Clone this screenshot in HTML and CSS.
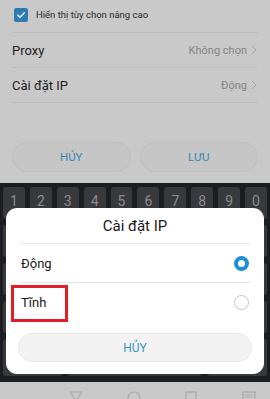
FILE: index.html
```html
<!DOCTYPE html>
<html lang="vi">
<head>
<meta charset="utf-8">
<link rel="stylesheet" href="styles.css">
</head>
<body>
<div class="screen">
  <div class="settings">
    <div class="check-row">
      <span class="checkbox">
        <svg width="10" height="10" viewBox="0 0 10 10"><path d="M1.8 5.2 L4 7.3 L8.3 2.8" fill="none" stroke="#d6e6f0" stroke-width="1.6" stroke-linecap="round" stroke-linejoin="round"/></svg>
      </span>
      <span class="check-label">Hiển thị tùy chọn nâng cao</span>
    </div>
    <div class="row">
      <span class="row-label">Proxy</span>
      <span class="row-value">Không chọn <svg class="chev" width="6" height="10" viewBox="0 0 6 10"><path d="M1 1 L5 5 L1 9" fill="none" stroke="#a4a4a4" stroke-width="1"/></svg></span>
    </div>
    <div class="row">
      <span class="row-label">Cài đặt IP</span>
      <span class="row-value">Động <svg class="chev" width="6" height="10" viewBox="0 0 6 10"><path d="M1 1 L5 5 L1 9" fill="none" stroke="#a4a4a4" stroke-width="1"/></svg></span>
    </div>
    <div class="actions">
      <button class="pill">HỦY</button>
      <button class="pill">LƯU</button>
    </div>
  </div>
  <div class="keyboard">
    <div class="keys">
      <span class="key">1</span><span class="key">2</span><span class="key">3</span><span class="key">4</span><span class="key">5</span><span class="key">6</span><span class="key">7</span><span class="key">8</span><span class="key">9</span><span class="key">0</span>
    </div>
    <div class="keys">
      <span class="key"></span><span class="key"></span><span class="key"></span><span class="key"></span><span class="key"></span><span class="key"></span><span class="key"></span><span class="key"></span><span class="key"></span><span class="key"></span>
    </div>
    <div class="keys">
      <span class="key"></span><span class="key"></span><span class="key"></span><span class="key"></span><span class="key"></span><span class="key"></span><span class="key"></span><span class="key"></span><span class="key"></span><span class="key"></span>
    </div>
    <div class="keys">
      <span class="key"></span><span class="key"></span><span class="key"></span><span class="key"></span><span class="key"></span><span class="key"></span><span class="key"></span><span class="key"></span><span class="key"></span><span class="key"></span>
    </div>
    <div class="bottom-keys">
      <span class="key"></span><span class="key space"></span><span class="key"></span>
    </div>
  </div>
  <div class="navbar">
    <svg width="14" height="10" viewBox="0 0 14 10"><path d="M1.5 3 L12.5 3 L7 12 Z" fill="none" stroke="#a8a8a8" stroke-width="1.2"/></svg>
    <svg width="14" height="10" viewBox="0 0 14 10"><circle cx="7" cy="9" r="6" fill="none" stroke="#a8a8a8" stroke-width="1.2"/></svg>
    <svg width="14" height="10" viewBox="0 0 14 10"><rect x="2" y="3" width="10" height="10" fill="none" stroke="#a8a8a8" stroke-width="1.2"/></svg>
    <svg width="14" height="10" viewBox="0 0 14 10"><rect x="1" y="3" width="12" height="10" fill="none" stroke="#a8a8a8" stroke-width="1.2"/><path d="M3 6 H11 M3 8 H11" stroke="#a8a8a8" stroke-width="0.8"/></svg>
  </div>

  <div class="dialog">
    <div class="dialog-title">Cài đặt IP</div>
    <div class="option">
      <span class="opt-label">Động</span>
      <span class="radio on"></span>
    </div>
    <div class="option last">
      <span class="opt-label">Tĩnh</span>
      <span class="radio"></span>
    </div>
    <div class="dialog-actions">
      <button class="pill wide">HỦY</button>
    </div>
  </div>
  <div class="highlight"></div>
</div>
</body>
</html>
```

FILE: styles.css
```css
* { box-sizing: border-box; }
html, body { margin: 0; padding: 0; }
body {
  width: 270px;
  height: 399px;
  overflow: hidden;
  font-family: Roboto, "Noto Sans", "Liberation Sans", sans-serif;
}
.screen {
  position: relative;
  width: 270px;
  height: 399px;
  background: #c9c9c9;
  display: flex;
  flex-direction: column;
}
.settings {
  height: 183px;
  padding: 0 12px;
  display: flex;
  flex-direction: column;
}
.check-row {
  height: 33px;
  display: flex;
  align-items: center;
  gap: 8px;
  padding: 0 0 3px 2px;
  border-bottom: 1px solid #bdbdbd;
}
.checkbox {
  width: 14px;
  height: 14px;
  border-radius: 2px;
  background: #2d7bb0;
  display: flex;
  align-items: center;
  justify-content: center;
}
.check-label {
  font-size: 9.5px;
  color: #2a2a2a;
}
.row {
  height: 35px;
  display: flex;
  align-items: center;
  justify-content: space-between;
  border-bottom: 1px solid #bdbdbd;
}
.row-label {
  font-size: 13px;
  color: #1e1e1e;
}
.row-value {
  font-size: 11px;
  color: #858585;
  display: flex;
  align-items: center;
  gap: 4px;
  padding-right: 1px;
}
.actions {
  margin-top: 39px;
  display: flex;
  gap: 9px;
}
.pill {
  flex: 1;
  height: 30px;
  border-radius: 15px;
  border: 1px solid #bfbfbf;
  background: #c6c6c6;
  color: #3b86b5;
  font-family: inherit;
  font-size: 11.5px;
  padding: 0;
}
.keyboard {
  height: 199px;
  background: #1c1d21;
  padding: 4px 3px 0;
  display: flex;
  flex-direction: column;
  gap: 6px;
}
.keys {
  display: grid;
  grid-template-columns: repeat(10, 1fr);
  gap: 5px;
  height: 32px;
}
.key {
  background: #38393d;
  border-radius: 3px;
  color: #8c8c8c;
  font-size: 14px;
  display: flex;
  justify-content: center;
  padding-top: 6px;
}
.bottom-keys {
  display: flex;
  gap: 5px;
  height: 37px;
}
.bottom-keys .key { width: 60px; }
.bottom-keys .key.space { flex: 1; }
.navbar {
  flex: 1;
  background: #c9c9c9;
  display: flex;
  justify-content: space-between;
  align-items: flex-start;
  padding: 7px 14px 0 69px;
}
.dialog {
  position: absolute;
  left: 6px;
  top: 208px;
  width: 258px;
  height: 166px;
  background: #fff;
  border-radius: 11px;
  display: flex;
  flex-direction: column;
  padding: 0 14px;
}
.dialog-title {
  height: 36px;
  display: flex;
  align-items: center;
  justify-content: center;
  font-size: 15px;
  color: #1a1a1a;
  border-bottom: 1px solid #e6e6e6;
}
.option {
  height: 39px;
  display: flex;
  align-items: center;
  justify-content: space-between;
  border-bottom: 1px solid #e6e6e6;
}
.option.last { border-bottom: none; }
.opt-label {
  font-size: 13px;
  color: #1a1a1a;
  padding-left: 1px;
}
.radio {
  width: 15px;
  height: 15px;
  border-radius: 50%;
  border: 1px solid #c4c4c4;
  margin-right: 1px;
}
.radio.on {
  border: 4px solid #1e90d8;
}
.dialog-actions {
  margin-top: 11px;
  display: flex;
}
.pill.wide {
  height: 29px;
  background: #f3f3f3;
  border: 1px solid #e8e8e8;
  color: #3b97c9;
  font-size: 12px;
  margin: 0 -2px;
}
.highlight {
  position: absolute;
  left: 11px;
  top: 285px;
  width: 57px;
  height: 37px;
  border: 3px solid #e31e26;
}
```
